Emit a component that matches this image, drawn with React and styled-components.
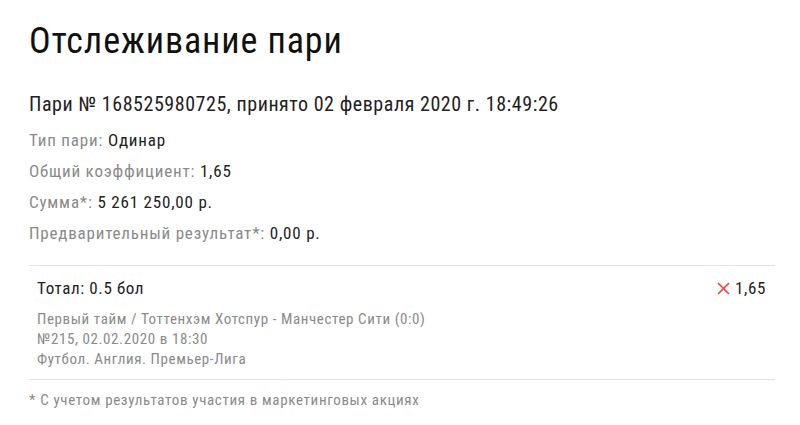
import React from "react";
import styled, { createGlobalStyle } from "styled-components";

const Global = createGlobalStyle`
  html, body { margin: 0; padding: 0; background: #fff; }
  body { font-family: "Roboto Condensed", "Roboto", "Liberation Sans", sans-serif; color: #1a1a1a; }
`;

const Page = styled.div`
  padding: 20px 25px 0 29px;
  width: 800px;
  box-sizing: border-box;
`;

const Title = styled.h1`
  margin: 0;
  font-size: 36px;
  font-weight: 400;
  line-height: 42px;
  letter-spacing: 0.9px;
  color: #111;
`;

const BetHead = styled.div`
  margin-top: 30px;
  font-size: 20px;
  line-height: 24px;
  letter-spacing: 0.55px;
  color: #222;
`;

const Info = styled.div`
  margin-top: 12px;
  display: flex;
  flex-direction: column;
  gap: 7px;
`;

const InfoRow = styled.div`
  font-size: 17px;
  line-height: 24px;
  letter-spacing: 0.8px;
  color: #8a8a8a;
`;

const Value = styled.span`
  color: #222;
`;

const Divider = styled.hr`
  margin: 0;
  border: none;
  border-top: 1px solid #e3e3e3;
`;

const Section = styled.div`
  margin-top: 20px;
`;

const Event = styled.div`
  padding: 11px 9px 10px 8px;
`;

const EventTop = styled.div`
  display: flex;
  justify-content: space-between;
  align-items: center;
  font-size: 17px;
  line-height: 22px;
  letter-spacing: 0.6px;
  color: #222;
`;

const Coef = styled.span`
  display: flex;
  align-items: center;
  gap: 5px;
`;

const EventMeta = styled.div`
  margin-top: 10px;
  font-size: 15px;
  line-height: 20px;
  letter-spacing: 0.6px;
  color: #8a8a8a;
`;

const Note = styled.div`
  margin-top: 10px;
  font-size: 15px;
  line-height: 20px;
  letter-spacing: 0.65px;
  color: #8a8a8a;
`;

const Cross = () => (
  <svg width="13" height="13" viewBox="0 0 13 13">
    <path d="M1 1L12 12M12 1L1 12" stroke="#f04040" strokeWidth="1.6" />
  </svg>
);

export default function App() {
  return (
    <>
      <Global />
      <Page>
        <Title>Отслеживание пари</Title>
        <BetHead>Пари № 168525980725, принято 02 февраля 2020 г. 18:49:26</BetHead>
        <Info>
          <InfoRow>Тип пари: <Value>Одинар</Value></InfoRow>
          <InfoRow>Общий коэффициент: <Value>1,65</Value></InfoRow>
          <InfoRow>Сумма*: <Value>5 261 250,00 р.</Value></InfoRow>
          <InfoRow>Предварительный результат*: <Value>0,00 р.</Value></InfoRow>
        </Info>
        <Section>
          <Divider />
          <Event>
            <EventTop>
              <span>Тотал: 0.5 бол</span>
              <Coef><Cross />1,65</Coef>
            </EventTop>
            <EventMeta>
              Первый тайм / Тоттенхэм Хотспур - Манчестер Сити (0:0)
              <br />№215, 02.02.2020 в 18:30
              <br />Футбол. Англия. Премьер-Лига
            </EventMeta>
          </Event>
          <Divider />
          <Note>* С учетом результатов участия в маркетинговых акциях</Note>
        </Section>
      </Page>
    </>
  );
}
